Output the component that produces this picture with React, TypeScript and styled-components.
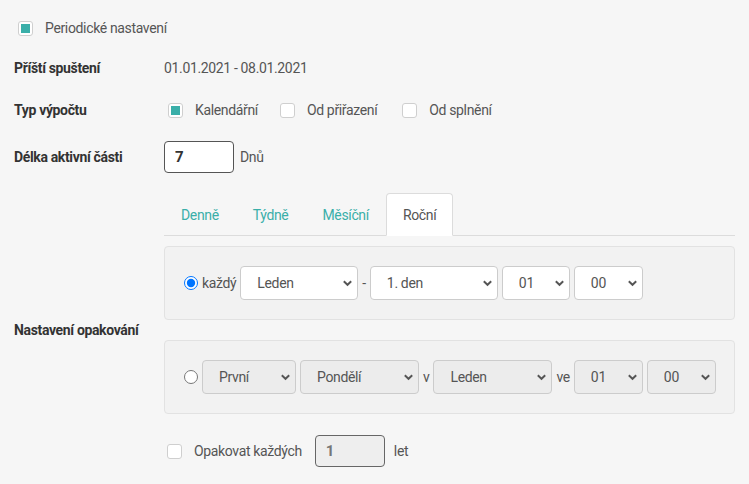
import React from "react";
import styled, { createGlobalStyle } from "styled-components";

const Global = createGlobalStyle`
  html, body { margin: 0; padding: 0; background: #f6f6f6; }
  body { font-family: Roboto, "Noto Sans", sans-serif; font-size: 14px; color: #555; letter-spacing: -0.35px; }
  * { box-sizing: border-box; }
`;

const Page = styled.div`
  width: 749px;
  height: 484px;
  padding: 10px 14px 0 14px;
  overflow: hidden;
`;

const Row = styled.div<{ $h: number }>`
  display: grid;
  grid-template-columns: 150px 1fr;
  align-items: center;
  height: ${(p) => p.$h}px;
`;

const TopRow = styled.div`
  display: flex;
  align-items: center;
  height: 36px;
  padding-left: 4px;
`;

const Label = styled.div`
  font-weight: 700;
  color: #333;
  font-size: 14px;
`;

const Value = styled.div`
  display: flex;
  align-items: center;
  color: #555;
`;

const CheckWrap = styled.label<{ $gap?: number }>`
  display: inline-flex;
  align-items: center;
  gap: 12px;
  margin-right: ${(p) => p.$gap ?? 0}px;
  color: #555;
  cursor: pointer;
`;

const Box = styled.span<{ $on?: boolean }>`
  width: 15px;
  height: 15px;
  border: 1px solid #cfcfcf;
  border-radius: 3px;
  background: #fff;
  display: inline-flex;
  align-items: center;
  justify-content: center;
  &::after {
    content: "";
    width: 9px;
    height: 9px;
    background: ${(p) => (p.$on ? "#3aafa9" : "transparent")};
  }
`;

const NumInput = styled.input<{ $disabled?: boolean }>`
  width: 70px;
  height: 32px;
  border: 1px solid ${(p) => (p.$disabled ? "#666" : "#555")};
  border-radius: 4px;
  background: ${(p) => (p.$disabled ? "#eeeeee" : "#fff")};
  color: ${(p) => (p.$disabled ? "#777" : "#333")};
  font-family: Roboto, sans-serif;
  font-weight: 700;
  font-size: 15px;
  padding: 0 10px;
  outline: none;
`;

const Unit = styled.span<{ $ml: number }>`
  margin-left: ${(p) => p.$ml}px;
  color: #555;
`;

const Tabs = styled.div`
  display: flex;
  margin-left: 150px;
  margin-top: 9px;
  border-bottom: 1px solid #dcdcdc;
  height: 43px;
`;

const Tab = styled.div<{ $active?: boolean }>`
  padding: 0 16px;
  display: flex;
  align-items: center;
  margin-bottom: -1px;
  border: 1px solid ${(p) => (p.$active ? "#dcdcdc" : "transparent")};
  border-bottom-color: ${(p) => (p.$active ? "#fff" : "transparent")};
  border-radius: 4px 4px 0 0;
  background: ${(p) => (p.$active ? "#fff" : "transparent")};
  color: ${(p) => (p.$active ? "#555" : "#3aafa9")};
`;

const Repeat = styled.div`
  display: grid;
  grid-template-columns: 150px 571px;
  align-items: center;
  margin-top: 10px;
`;

const Panels = styled.div`
  display: flex;
  flex-direction: column;
  gap: 20px;
`;

const Panel = styled.div`
  height: 74px;
  background: #f2f2f2;
  border: 1px solid #e2e2e2;
  border-radius: 4px;
  display: flex;
  align-items: center;
  padding-left: 19px;
  gap: 4px;
`;

const Radio = styled.input`
  margin: 0;
  width: 14px;
  height: 14px;
`;

const Word = styled.span`
  color: #555;
`;

const SelWrap = styled.div<{ $w: number }>`
  position: relative;
  width: ${(p) => p.$w}px;
  height: 34px;
`;

const Sel = styled.select<{ $dis?: boolean }>`
  appearance: none;
  width: 100%;
  height: 100%;
  border: 1px solid #cccccc;
  border-radius: 4px;
  background: ${(p) => (p.$dis ? "#ececec" : "#fff")};
  color: #555;
  font-family: Roboto, sans-serif;
  font-size: 14px;
  letter-spacing: -0.35px;
  padding: 0 16px;
  outline: none;
`;

const Chevron = styled.svg`
  position: absolute;
  right: 5px;
  top: 12px;
  width: 11px;
  height: 10px;
  pointer-events: none;
`;

const Bottom = styled.div`
  display: flex;
  align-items: center;
  margin-left: 153px;
  margin-top: 20px;
  height: 34px;
`;

const Select = ({ w, value, dis }: { w: number; value: string; dis?: boolean }) => (
  <SelWrap $w={w}>
    <Sel $dis={dis} defaultValue={value}>
      <option>{value}</option>
    </Sel>
    <Chevron viewBox="0 0 11 10">
      <path d="M1.8 3.2 L5.5 6.8 L9.2 3.2" fill="none" stroke="#555" strokeWidth="1.9" />
    </Chevron>
  </SelWrap>
);

export default function App() {
  return (
    <>
      <Global />
      <Page>
        <TopRow>
          <CheckWrap>
            <Box $on />
            Periodické nastavení
          </CheckWrap>
        </TopRow>
        <Row $h={44}>
          <Label>Příští spuštení</Label>
          <Value>01.01.2021 - 08.01.2021</Value>
        </Row>
        <Row $h={40}>
          <Label>Typ výpočtu</Label>
          <Value style={{ paddingLeft: 4 }}>
            <CheckWrap $gap={22}>
              <Box $on />
              Kalendářní
            </CheckWrap>
            <CheckWrap $gap={25}>
              <Box />
              Od přiřazení
            </CheckWrap>
            <CheckWrap>
              <Box />
              Od splnění
            </CheckWrap>
          </Value>
        </Row>
        <Row $h={54}>
          <Label>Délka aktivní části</Label>
          <Value>
            <NumInput defaultValue="7" />
            <Unit $ml={6}>Dnů</Unit>
          </Value>
        </Row>
        <Tabs>
          <Tab>Denně</Tab>
          <Tab>Týdně</Tab>
          <Tab>Měsíční</Tab>
          <Tab $active>Roční</Tab>
        </Tabs>
        <Repeat>
          <Label>Nastavení opakování</Label>
          <Panels>
            <Panel>
              <Radio type="radio" name="r" defaultChecked />
              <Word>každý</Word>
              <Select w={118} value="Leden" />
              <Word>-</Word>
              <Select w={128} value="1. den" />
              <Select w={68} value="01" />
              <Select w={69} value="00" />
            </Panel>
            <Panel>
              <Radio type="radio" name="r" />
              <Select w={94} value="První" dis />
              <Select w={119} value="Pondělí" dis />
              <Word>v</Word>
              <Select w={119} value="Leden" dis />
              <Word>ve</Word>
              <Select w={69} value="01" dis />
              <Select w={69} value="00" dis />
            </Panel>
          </Panels>
        </Repeat>
        <Bottom>
          <CheckWrap>
            <Box />
            Opakovat každých
          </CheckWrap>
          <NumInput $disabled disabled defaultValue="1" style={{ marginLeft: 13 }} />
          <Unit $ml={9}>let</Unit>
        </Bottom>
      </Page>
    </>
  );
}
